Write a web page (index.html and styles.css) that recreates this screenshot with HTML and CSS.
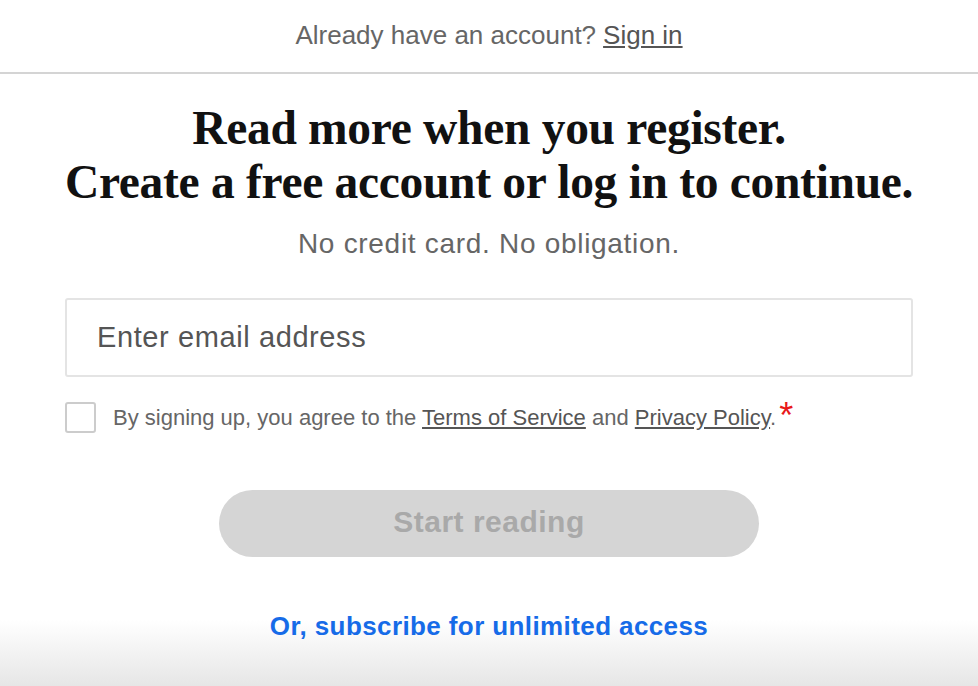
FILE: index.html
```html
<!DOCTYPE html>
<html lang="en">
<head>
    <meta charset="UTF-8">
    <meta name="viewport" content="width=device-width, initial-scale=1.0">
    <title>Register</title>
    <link rel="stylesheet" href="styles.css">
</head>
<body>
    <div class="topbar">
        Already have an account? <a href="#" class="signin">Sign in</a>
    </div>

    <div class="container">
        <h1>Read more when you register.<br>Create a free account or log in to continue.</h1>
        <p class="subtitle">No credit card. No obligation.</p>

        <form class="form">
            <input type="email" class="email" placeholder="Enter email address">

            <label class="terms">
                <input type="checkbox" class="check">
                <span class="box"></span>
                <span>By signing up, you agree to the <a href="#">Terms of Service</a> and <a href="#">Privacy Policy</a>.<span class="req">*</span></span>
            </label>

            <button type="button" class="start" disabled>Start reading</button>
        </form>

        <a href="#" class="subscribe">Or, subscribe for unlimited access</a>
    </div>
</body>
</html>
```

FILE: styles.css
```css
html {
    min-height: 100%;
}

body {
    font-family: "Liberation Sans", Arial, sans-serif;
    margin: 0;
    min-height: 686px;
    color: #666666;
    background: linear-gradient(to bottom, #ffffff 620px, #e6e6e6 686px);
}

.topbar {
    height: 74px;
    display: flex;
    justify-content: center;
    align-items: center;
    font-size: 26px;
    color: #666666;
    border-bottom: 2px solid #d4d4d4;
    box-sizing: border-box;
    padding-bottom: 2px;
    gap: 7px;
}

.signin {
    color: #555555;
}

.container {
    width: 848px;
    margin: 0 auto;
    text-align: center;
}

h1 {
    font-family: "Liberation Serif", "Times New Roman", serif;
    font-weight: 700;
    font-size: 47.5px;
    line-height: 54px;
    color: #111111;
    margin: 27px -10px 0;
    letter-spacing: -0.3px;
}

.subtitle {
    font-size: 28px;
    letter-spacing: 0.7px;
    margin: 18px 0 0;
    line-height: 34px;
}

.form {
    margin-top: 37px;
}

.email {
    display: block;
    width: 100%;
    height: 79px;
    box-sizing: border-box;
    border: 2px solid #e4e4e4;
    border-radius: 3px;
    padding: 0 30px;
    font-family: inherit;
    font-size: 29px;
    letter-spacing: 0.6px;
    color: #333333;
    outline: none;
}

.email::placeholder {
    color: #555555;
}

.terms {
    display: flex;
    align-items: center;
    gap: 17px;
    margin-top: 25px;
    font-size: 22px;
    text-align: left;
    cursor: pointer;
}

.terms a {
    color: #555555;
}

.check {
    display: none;
}

.box {
    width: 31px;
    height: 31px;
    box-sizing: border-box;
    border: 2px solid #cccccc;
    border-radius: 3px;
    flex-shrink: 0;
}

.req {
    color: #e8191a;
    font-size: 36px;
    line-height: 0;
    vertical-align: -3px;
    margin-left: 3px;
}

.start {
    display: block;
    width: 540px;
    height: 67px;
    margin: 57px auto 0;
    border: none;
    border-radius: 34px;
    background: #d5d5d5;
    color: #a9a9a9;
    font-family: inherit;
    font-weight: 700;
    font-size: 30px;
    letter-spacing: 0.5px;
    padding-bottom: 4px;
}

.subscribe {
    display: inline-block;
    margin-top: 54px;
    color: #166be8;
    font-weight: 700;
    font-size: 26px;
    letter-spacing: 0.4px;
    text-decoration: none;
}
```
